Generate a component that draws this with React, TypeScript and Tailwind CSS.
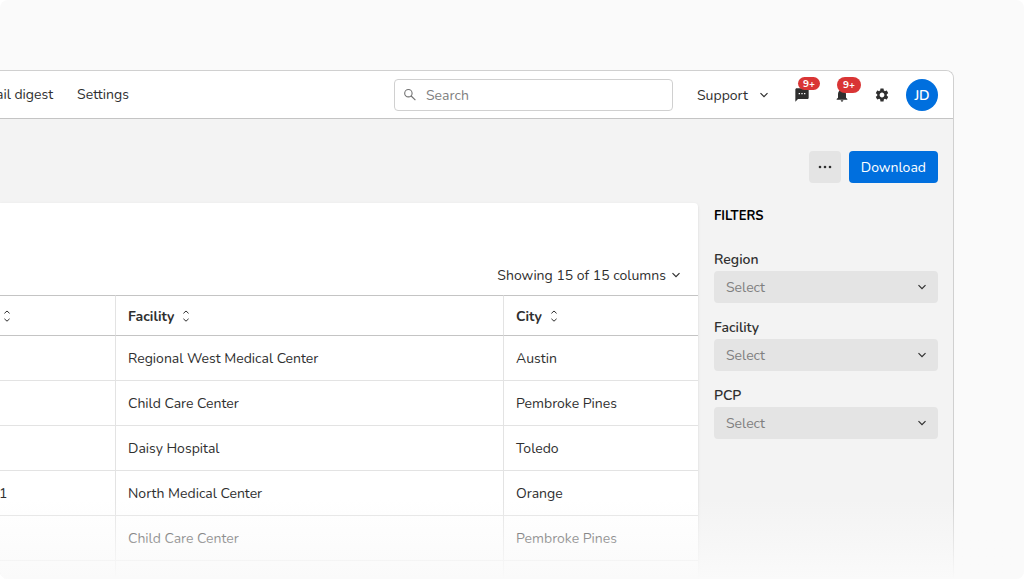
import type { ReactNode } from "react";
import { MdNotifications, MdSettings, MdSms } from "react-icons/md";

const filters = ["Region", "Facility", "PCP"];

const rows = [
  { id: "", facility: "Regional West Medical Center", city: "Austin" },
  { id: "", facility: "Child Care Center", city: "Pembroke Pines" },
  { id: "", facility: "Daisy Hospital", city: "Toledo" },
  { id: "1", facility: "North Medical Center", city: "Orange" },
  { id: "", facility: "Child Care Center", city: "Pembroke Pines" },
  { id: "", facility: "", city: "" },
];

function Chevron({ className = "" }: { className?: string }) {
  return (
    <svg viewBox="0 0 16 16" className={`size-4 shrink-0 ${className}`} fill="none" stroke="currentColor" strokeWidth="1.2" aria-hidden="true">
      <path d="M4.5 6.2 8 9.7l3.5-3.5" />
    </svg>
  );
}

function SortButton({ label, children }: { label: string; children?: ReactNode }) {
  return (
    <button type="button" aria-label={`Sort by ${label}`} className="flex items-center gap-1 font-bold">
      {children}
      <svg viewBox="0 0 16 16" className="size-4 shrink-0" fill="none" stroke="currentColor" strokeWidth="1" aria-hidden="true">
        <path d="M5.4 4.4 8 2l2.6 2.4M5.4 9.8 8 12.2l2.6-2.4" />
      </svg>
    </button>
  );
}

function Header() {
  return (
    <header className="flex h-12 items-center border-b border-[#c4c4c4] bg-white pr-[15px]">
      <nav className="flex w-[129px] shrink-0 justify-end gap-6 overflow-hidden whitespace-nowrap">
        <a href="#digest">Email digest</a>
        <a href="#settings">Settings</a>
      </nav>
      <label className="ml-auto flex h-8 w-[279px] items-center rounded border border-[#d0d0d0] bg-white pl-[7px]">
        <svg viewBox="0 0 16 16" className="size-4 shrink-0 text-[#707070]" fill="none" stroke="currentColor" strokeWidth="1.1" aria-hidden="true">
          <circle cx="6.4" cy="6.2" r="3.7" />
          <path d="m9.2 9 4.2 4.2" />
        </svg>
        <input type="search" aria-label="Search" placeholder="Search" className="ml-2 w-full min-w-0 bg-transparent pt-0.5 outline-none placeholder:text-[#808080]" />
      </label>
      <button type="button" className="ml-6 flex w-[75px] shrink-0 items-center justify-between whitespace-nowrap">
        <span className="pt-0.5">Support</span>
        <Chevron />
      </button>
      <div className="ml-[22px] flex shrink-0 items-center gap-6">
        <button type="button" aria-label="Messages" className="relative">
          <MdSms className="size-4" />
          <span className="absolute -top-2.5 left-1 flex h-[13px] w-[22px] items-center justify-center rounded-full bg-[#d93535] pt-0.5 text-[10px] font-bold text-white">9+</span>
        </button>
        <button type="button" aria-label="Notifications" className="relative">
          <MdNotifications className="size-4" />
          <span className="absolute -top-2.5 left-[3px] flex h-4 w-6 items-center justify-center rounded-full bg-[#d93535] pt-0.5 text-[10px] font-bold text-white">9+</span>
        </button>
        <button type="button" aria-label="Preferences">
          <MdSettings className="size-4" />
        </button>
      </div>
      <button type="button" aria-label="Account" className="ml-4 flex size-8 shrink-0 items-center justify-center rounded-full bg-[#006fde] pt-0.5 font-semibold text-white">
        JD
      </button>
    </header>
  );
}

function ResultsTable() {
  return (
    <table className="w-full table-fixed border-separate border-spacing-0 text-left">
      <colgroup>
        <col className="w-[115px]" />
        <col className="w-[388px]" />
        <col />
      </colgroup>
      <thead>
        <tr className="h-[41px]">
          <th className="border-y border-[#c4c4c4] p-0 pt-0.5" scope="col">
            <div className="-ml-px"><SortButton label="ID" /></div>
          </th>
          <th className="border-y border-l border-y-[#c4c4c4] border-l-[#e3e3e3] px-3 pt-0.5 pb-0" scope="col">
            <SortButton label="Facility">Facility</SortButton>
          </th>
          <th className="border-y border-l border-y-[#c4c4c4] border-l-[#e3e3e3] px-3 pt-0.5 pb-0" scope="col">
            <SortButton label="City">City</SortButton>
          </th>
        </tr>
      </thead>
      <tbody>
        {rows.map((row, i) => (
          <tr key={i} className="h-[45px]">
            <td className="border-b border-[#e3e3e3] p-0 pt-0.5">
              <div className="-ml-px">{row.id}</div>
            </td>
            <td className="border-b border-l border-[#e3e3e3] px-3 pt-0.5 pb-0">{row.facility}</td>
            <td className="border-b border-l border-[#e3e3e3] px-3 pt-0.5 pb-0">{row.city}</td>
          </tr>
        ))}
      </tbody>
    </table>
  );
}

function Filters() {
  return (
    <aside className="w-56 shrink-0">
      <h2 className="pt-[5px] pb-[27px] text-[13px] leading-4 font-bold text-black">FILTERS</h2>
      <div className="flex flex-col gap-4">
        {filters.map((name) => {
          const id = name.toLowerCase();
          return (
            <div key={id}>
              <label htmlFor={id} className="block pb-0.5 leading-[18px] font-semibold">{name}</label>
              <div className="relative">
                <select id={id} defaultValue="" className="block h-8 w-full appearance-none rounded bg-[#e4e4e4] px-3 pt-0.5 text-[#808080]">
                  <option value="">Select</option>
                </select>
                <Chevron className="pointer-events-none absolute top-2 right-2" />
              </div>
            </div>
          );
        })}
      </div>
    </aside>
  );
}

export default function App() {
  return (
    <div className="h-screen overflow-hidden bg-white font-['Nunito','Lato',sans-serif] text-sm text-[#2f2f2f] antialiased">
      <div className="relative h-full overflow-hidden rounded-lg bg-[#fafafa] pt-[70px] pr-[70px]">
        <div className="h-full overflow-hidden rounded-tr-lg border-t border-r border-[#d0d0d0] bg-[#f3f3f3]">
          <Header />
          <main className="pt-8 pr-[15px]">
            <div className="flex justify-end gap-2">
              <button type="button" aria-label="More actions" className="flex size-8 items-center justify-center rounded bg-[#e4e4e4]">
                <svg viewBox="0 0 16 16" className="size-4" fill="currentColor" aria-hidden="true">
                  <circle cx="3" cy="8" r="1.3" />
                  <circle cx="8" cy="8" r="1.3" />
                  <circle cx="13" cy="8" r="1.3" />
                </svg>
              </button>
              <button type="button" className="h-8 rounded bg-[#006fde] px-3 pt-0.5 text-white">Download</button>
            </div>
            <div className="mt-5 flex gap-4">
              <section className="min-w-0 flex-1 rounded-tr bg-white shadow">
                <div className="flex h-[92px] items-end justify-end pr-[14px] pb-[9px]">
                  <button type="button" className="flex items-center gap-0.5">
                    <span className="pt-0.5">Showing 15 of 15 columns</span>
                    <Chevron />
                  </button>
                </div>
                <ResultsTable />
              </section>
              <Filters />
            </div>
          </main>
        </div>
        <div className="pointer-events-none absolute inset-x-0 bottom-0 h-20 bg-linear-to-b from-[#fafafa]/0 to-[#fafafa]" />
      </div>
    </div>
  );
}
